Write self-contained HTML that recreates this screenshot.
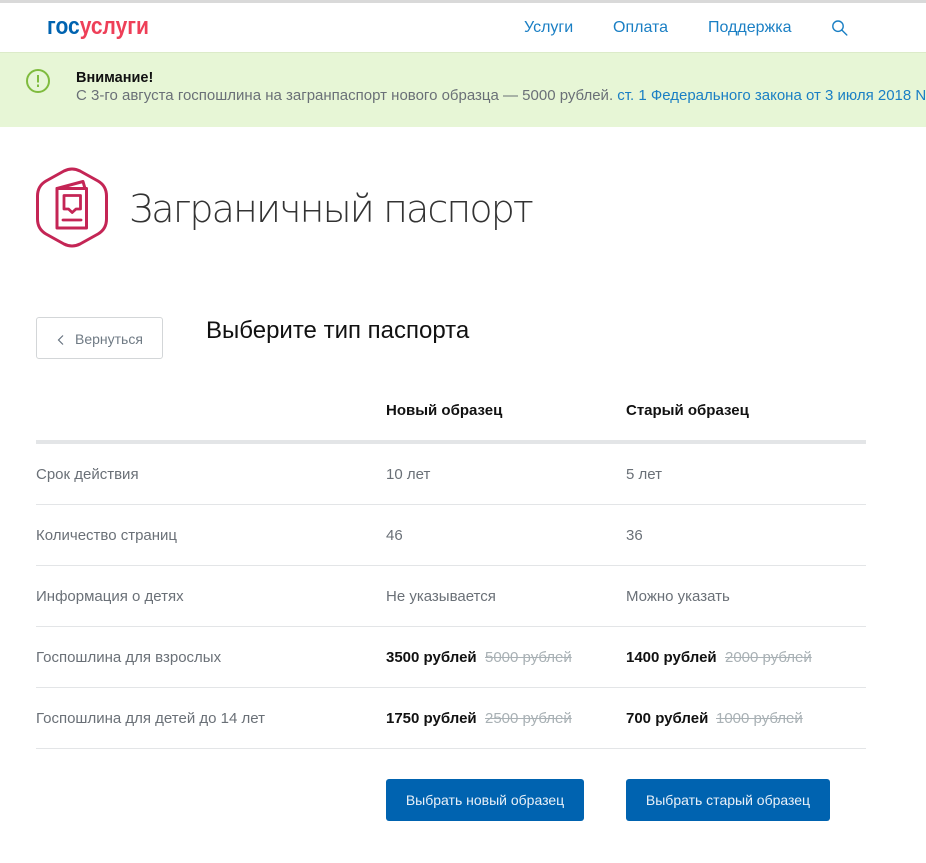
<!DOCTYPE html>
<html lang="ru">
<head>
<meta charset="utf-8">
<title>Заграничный паспорт</title>
<style>
html,body{margin:0;padding:0;background:#fff}
body{width:926px;height:863px;position:relative;overflow:hidden;font-family:"Liberation Sans",Arial,sans-serif;font-size:15px;color:#6a7077}
.a{position:absolute;white-space:nowrap;line-height:18px}
.l{position:absolute;left:36px;width:830px;height:1px;background:#e3e5e7}
.b{font-weight:bold;color:#111}
.s{color:#a9b1b5;text-decoration:line-through}
.n{color:#1a7fc4;font-size:16px;top:19px}
.btn{position:absolute;top:779px;height:42px;line-height:43px;background:#0063b0;border-radius:3px;color:#e8f0f8;text-align:center;font-size:14px;white-space:nowrap}
</style>
</head>
<body>
<div style="position:absolute;left:0;top:0;width:926px;height:3px;background:#d9d9d9"></div>
<div class="a" style="left:47px;top:13px;font-size:24px;font-weight:bold;line-height:28px;transform:scaleX(.875);transform-origin:0 0"><span style="color:#0063b0">гос</span><span style="color:#ee3f58">услуги</span></div>
<div class="a n" style="left:524px">Услуги</div>
<div class="a n" style="left:613px">Оплата</div>
<div class="a n" style="left:708px">Поддержка</div>
<svg style="position:absolute;left:831px;top:19px" width="18" height="18" viewBox="0 0 18 18" fill="none" stroke="#1a7fc4" stroke-width="1.4"><circle cx="7" cy="7.200" r="5.200"/><path d="M10.800 11l5 5" stroke-linecap="round"/></svg>

<div style="position:absolute;left:0;top:52px;width:926px;height:75px;background:#e7f6d6;border-top:1px solid #dcebc9;box-sizing:border-box"></div>
<svg style="position:absolute;left:25px;top:68px" width="26" height="26" viewBox="0 0 26 26" fill="none"><circle cx="13" cy="13" r="11" stroke="#7fbb3e" stroke-width="2"/><path d="M13 7v7.500" stroke="#7fbb3e" stroke-width="2"/><path d="M13 16.500v2.500" stroke="#7fbb3e" stroke-width="2"/></svg>
<div class="a" style="left:76px;top:69px;font-weight:bold;color:#111;font-size:14.500px">Внимание!</div>
<div class="a" style="left:76px;top:87px;width:850px;overflow:hidden">С 3-го августа госпошлина на загранпаспорт нового образца — 5000 рублей. <span style="color:#1a7fc4">ст. 1 Федерального закона от 3 июля 2018 N</span></div>

<svg style="position:absolute;left:36px;top:167px" width="73" height="81" viewBox="0 0 73 81" fill="none" stroke="#c42555" stroke-linejoin="round" stroke-linecap="round" stroke-width="3"><path d="M28 4Q36 0 44 4L62 14Q70.500 19 70.500 29V52Q70.500 62 62 67L44 77Q36 81 28 77L10 67Q1.500 62 1.500 52V29Q1.500 19 10 14Z"/><path d="M21 21.500H50.500V61H21Z"/><path d="M21 21.500L47 14.500L49 21.500"/><path d="M28 28.500H44.500V42H40L36.200 45.500L32.500 42H28Z" stroke-width="2.800"/><path d="M27 53H45" stroke-width="2.800"/></svg>
<div class="a" style="left:129px;top:182px;font-family:'DejaVu Sans','Liberation Sans',sans-serif;font-weight:200;font-size:38px;line-height:54px;color:#333;letter-spacing:-1.900px">Заграничный паспорт</div>

<div style="position:absolute;left:36px;top:317px;width:127px;height:42px;border:1px solid #d3d6d8;border-radius:3px;box-sizing:border-box"></div>
<svg style="position:absolute;left:56px;top:333px" width="10" height="14" viewBox="0 0 10 14" fill="none" stroke="#66727f" stroke-width="1.200"><path d="M7 2.500L2.500 7l4.500 4.500"/></svg>
<div class="a" style="left:75px;top:330px;font-size:14px;color:#6f7a84">Вернуться</div>
<div class="a" style="left:206px;top:316px;font-size:24px;line-height:30px;color:#111">Выберите тип паспорта</div>

<div class="a b" style="left:386px;top:402px">Новый образец</div>
<div class="a b" style="left:626px;top:402px">Старый образец</div>
<div style="position:absolute;left:36px;top:440px;width:830px;height:4px;background:#e3e5e7"></div>

<div class="a" style="left:36px;top:466px">Срок действия</div>
<div class="a" style="left:386px;top:466px">10 лет</div>
<div class="a" style="left:626px;top:466px">5 лет</div>
<div class="l" style="top:504px"></div>

<div class="a" style="left:36px;top:527px">Количество страниц</div>
<div class="a" style="left:386px;top:527px">46</div>
<div class="a" style="left:626px;top:527px">36</div>
<div class="l" style="top:565px"></div>

<div class="a" style="left:36px;top:588px">Информация о детях</div>
<div class="a" style="left:386px;top:588px">Не указывается</div>
<div class="a" style="left:626px;top:588px">Можно указать</div>
<div class="l" style="top:626px"></div>

<div class="a" style="left:36px;top:649px">Госпошлина для взрослых</div>
<div class="a" style="left:386px;top:649px"><span class="b">3500 рублей</span></div>
<div class="a s" style="left:485px;top:649px">5000 рублей</div>
<div class="a" style="left:626px;top:649px"><span class="b">1400 рублей</span></div>
<div class="a s" style="left:725px;top:649px">2000 рублей</div>
<div class="l" style="top:687px"></div>

<div class="a" style="left:36px;top:710px">Госпошлина для детей до 14 лет</div>
<div class="a" style="left:386px;top:710px"><span class="b">1750 рублей</span></div>
<div class="a s" style="left:485px;top:710px">2500 рублей</div>
<div class="a" style="left:626px;top:710px"><span class="b">700 рублей</span></div>
<div class="a s" style="left:716px;top:710px">1000 рублей</div>
<div class="l" style="top:748px"></div>

<div class="btn" style="left:386px;width:198px">Выбрать новый образец</div>
<div class="btn" style="left:626px;width:204px">Выбрать старый образец</div>
</body>
</html>
